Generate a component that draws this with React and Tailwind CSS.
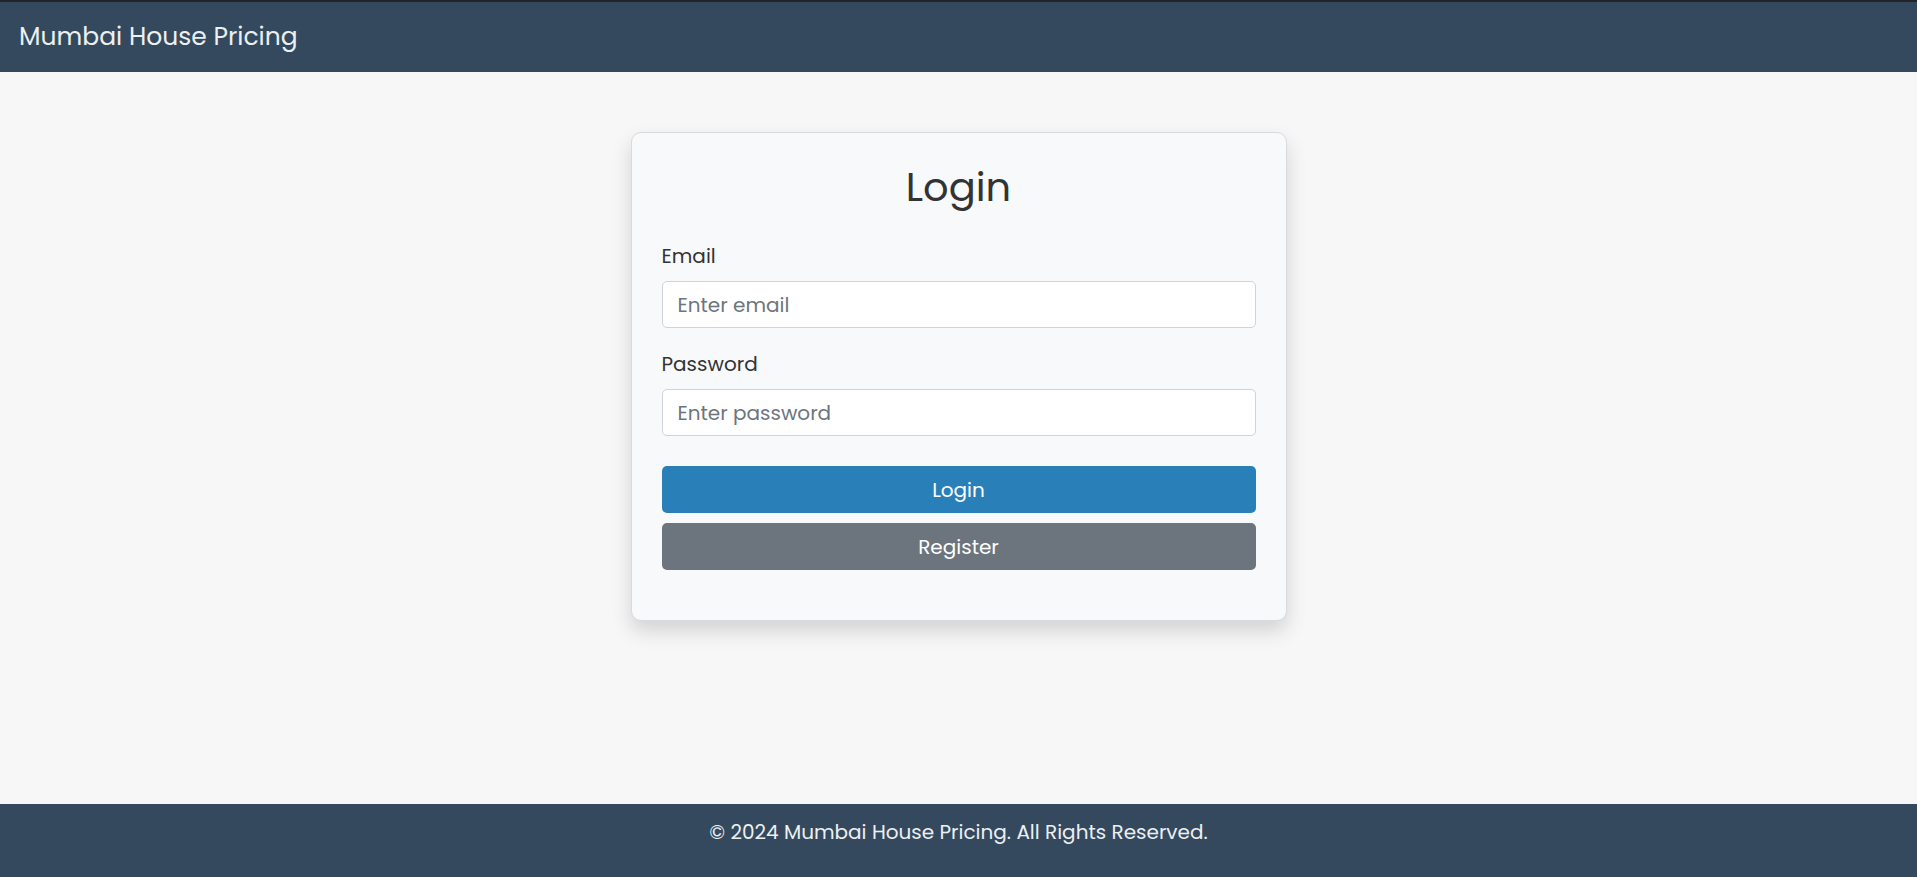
function Field({ id, label, type, placeholder }) {
  return (
    <div>
      <label htmlFor={id} className="mb-2.5 block leading-[30px]">
        {label}
      </label>
      <input
        id={id}
        type={type}
        placeholder={placeholder}
        className="block h-[47px] w-full rounded-[5px] border border-[#ced4da] bg-white px-[15px] text-[#333] placeholder:text-[#6c757d]"
      />
    </div>
  );
}

export default function App() {
  return (
    <div className="flex min-h-screen flex-col bg-[#f7f7f7] font-[Poppins,Inter,sans-serif] text-xl text-[#333]">
      <header className="border-t-2 border-[#212529] bg-[#34495e] px-[19px] py-4">
        <a href="#" className="block text-[25px] leading-[38px] text-[#ecf0f1]">
          Mumbai House Pricing
        </a>
      </header>

      <main className="flex flex-1 justify-center px-4 py-[60px]">
        <section className="w-full max-w-[656px] self-start rounded-[10px] border border-[#d7dade] bg-[#f8f9fb] px-[30px] pt-[30px] pb-[50px] shadow-[0_10px_20px_rgba(0,0,0,0.15)]">
          <h1 className="mb-[30px] text-center text-[40px] leading-[48px]">Login</h1>
          <form onSubmit={(e) => e.preventDefault()}>
            <div className="flex flex-col gap-[21px]">
              <Field id="email" label="Email" type="email" placeholder="Enter email" />
              <Field id="password" label="Password" type="password" placeholder="Enter password" />
            </div>
            <div className="mt-[30px] flex flex-col gap-2.5">
              <button type="submit" className="h-[47px] rounded-[5px] bg-[#2980b9] text-white">
                Login
              </button>
              <button type="button" className="h-[47px] rounded-[5px] bg-[#6c757d] text-white">
                Register
              </button>
            </div>
          </form>
        </section>
      </main>

      <footer className="bg-[#34495e] px-4 pt-[13px] pb-[30px] text-center text-[#ecf0f1]">
        <p className="leading-[30px]">© 2024 Mumbai House Pricing. All Rights Reserved.</p>
      </footer>
    </div>
  );
}
